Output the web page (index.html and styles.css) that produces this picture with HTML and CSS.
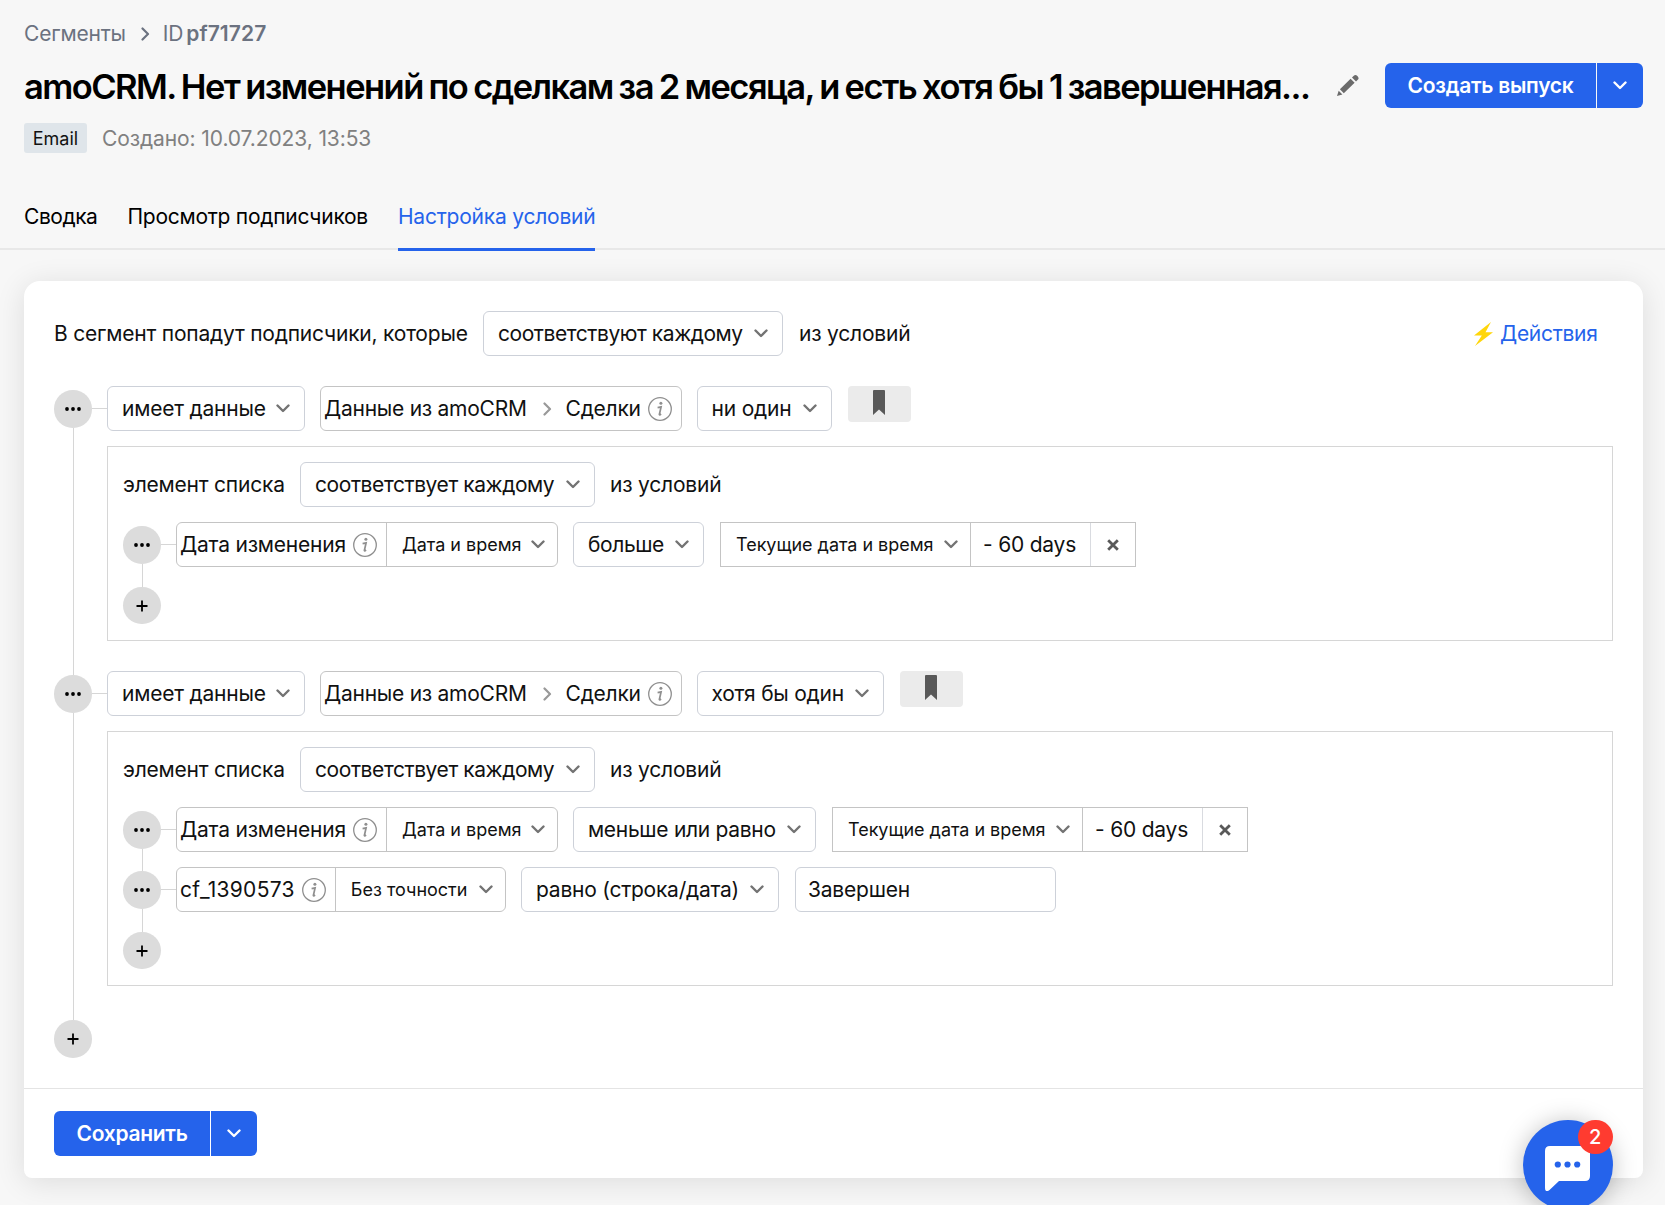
FILE: index.html
```html
<!DOCTYPE html>
<html lang="ru">
<head>
<meta charset="utf-8">
<title>Настройка условий</title>
<link rel="stylesheet" href="styles.css">
</head>
<body>
<svg class="defs" width="0" height="0" aria-hidden="true">
  <symbol id="down" viewBox="0 0 14 9"><path d="M1.500 1.500 7 7l5.500-5.500" fill="none" stroke="currentColor" stroke-width="2.400" stroke-linecap="round" stroke-linejoin="round"/></symbol>
  <symbol id="right" viewBox="0 0 9 14"><path d="M1.500 1.500 7 7l-5.500 5.500" fill="none" stroke="currentColor" stroke-width="2.200" stroke-linecap="round" stroke-linejoin="round"/></symbol>
  <symbol id="info" viewBox="0 0 24 24"><circle cx="12" cy="12" r="11.300" fill="none" stroke="currentColor" stroke-width="1.300"/><circle cx="12.900" cy="6.300" r="1.500" fill="currentColor"/><path d="M9.600 10.600l3.500-.7-1.700 7.300c-.2.900.4.800 1.700-.2" fill="none" stroke="currentColor" stroke-width="1.700"/></symbol>
  <symbol id="dots" viewBox="0 0 16 4"><circle cx="2" cy="2" r="1.900"/><circle cx="8" cy="2" r="1.900"/><circle cx="14" cy="2" r="1.900"/></symbol>
  <symbol id="plus" viewBox="0 0 12 12"><path d="M6 .5v11M.5 6h11" stroke="currentColor" stroke-width="1.800"/></symbol>
  <symbol id="mark" viewBox="0 0 12 25"><path d="M1 0h10q1 0 1 1v24l-6-5.500L0 25V1q0-1 1-1z" fill="currentColor"/></symbol>
  <symbol id="cross" viewBox="0 0 12 12"><path d="M1.200 1.200l9.600 9.600M10.800 1.200l-9.600 9.600" stroke="currentColor" stroke-width="2.800"/></symbol>
</svg>

<header class="header">
  <nav class="crumbs"><span>Сегменты</span><svg class="crumb-arrow"><use href="#right"/></svg><span>ID</span><b>pf71727</b></nav>
  <div class="headline">
    <h1 class="title">amoCRM. Нет изменений по сделкам за 2 месяца, и есть хотя бы 1 завершенная...</h1>
    <svg class="pencil" viewBox="0 0 22 21"><path d="M0 21l1.700-5.200 3.700 3.600zM2.900 14.300 13.600 3.800l4 3.900L6.800 18.200zM15 2.500 16.800.8q1.600-1.500 3.600.3 2 2 .6 3.500L19 6.500z" fill="#6b6b6b"/></svg>
    <div class="split create"><button class="btn">Создать выпуск</button><button class="btn-more"><svg class="down"><use href="#down"/></svg></button></div>
  </div>
  <div class="meta"><span class="tag">Email</span><span class="created">Создано: 10.07.2023, 13:53</span></div>
  <nav class="tabs"><a>Сводка</a><a>Просмотр подписчиков</a><a class="active">Настройка условий</a></nav>
</header>

<main class="card">
  <div class="conditions">
    <div class="row intro">
      <span class="label w-intro">В сегмент попадут подписчики, которые</span>
      <div class="select w-all"><span>соответствуют каждому</span><svg class="down"><use href="#down"/></svg></div>
      <span class="label">из условий</span>
      <a class="actions"><svg class="bolt" viewBox="0 0 19 24"><path d="M17 0 0 13.500h7.800L1 24 19 10.300h-7.500z" fill="#ffd60a"/></svg><span>Действия</span></a>
    </div>

    <section class="group">
      <div class="rail"><i class="lead"></i><div class="dot"><svg class="dots"><use href="#dots"/></svg></div><i class="line"></i></div>
      <i class="stub"></i>
      <div class="content">
        <div class="row">
          <div class="select w-has"><span>имеет данные</span><svg class="down"><use href="#down"/></svg></div>
          <div class="field w-path"><span>Данные из amoCRM</span><svg class="path-arrow"><use href="#right"/></svg><span>Сделки</span><svg class="info"><use href="#info"/></svg></div>
          <div class="select w-none"><span>ни один</span><svg class="down"><use href="#down"/></svg></div>
          <button class="bookmark"><svg><use href="#mark"/></svg></button>
        </div>
        <div class="box">
          <div class="row">
            <span class="label w-item">элемент списка</span>
            <div class="select w-each"><span>соответствует каждому</span><svg class="down"><use href="#down"/></svg></div>
            <span class="label">из условий</span>
          </div>
          <div class="rule">
            <div class="rail"><i class="lead"></i><div class="dot"><svg class="dots"><use href="#dots"/></svg></div><i class="line"></i></div>
            <i class="stub"></i>
            <div class="row">
              <div class="field joined w-date"><span>Дата изменения</span><svg class="info"><use href="#info"/></svg><div class="part"><span>Дата и время</span><svg class="down"><use href="#down"/></svg></div></div>
              <div class="select w-more"><span>больше</span><svg class="down"><use href="#down"/></svg></div>
              <div class="period"><div class="now"><span>Текущие дата и время</span><svg class="down"><use href="#down"/></svg></div><div class="shift">- 60 days</div><div class="clear"><svg><use href="#cross"/></svg></div></div>
            </div>
          </div>
          <div class="add"><div class="dot"><svg class="plus"><use href="#plus"/></svg></div></div>
        </div>
      </div>
    </section>

    <section class="group last">
      <div class="rail"><i class="lead"></i><div class="dot"><svg class="dots"><use href="#dots"/></svg></div><i class="line"></i></div>
      <i class="stub"></i>
      <div class="content">
        <div class="row">
          <div class="select w-has"><span>имеет данные</span><svg class="down"><use href="#down"/></svg></div>
          <div class="field w-path"><span>Данные из amoCRM</span><svg class="path-arrow"><use href="#right"/></svg><span>Сделки</span><svg class="info"><use href="#info"/></svg></div>
          <div class="select w-one"><span>хотя бы один</span><svg class="down"><use href="#down"/></svg></div>
          <button class="bookmark"><svg><use href="#mark"/></svg></button>
        </div>
        <div class="box">
          <div class="row">
            <span class="label w-item">элемент списка</span>
            <div class="select w-each"><span>соответствует каждому</span><svg class="down"><use href="#down"/></svg></div>
            <span class="label">из условий</span>
          </div>
          <div class="rule">
            <div class="rail"><i class="lead"></i><div class="dot"><svg class="dots"><use href="#dots"/></svg></div><i class="line"></i></div>
            <i class="stub"></i>
            <div class="row">
              <div class="field joined w-date"><span>Дата изменения</span><svg class="info"><use href="#info"/></svg><div class="part"><span>Дата и время</span><svg class="down"><use href="#down"/></svg></div></div>
              <div class="select w-less"><span>меньше или равно</span><svg class="down"><use href="#down"/></svg></div>
              <div class="period"><div class="now"><span>Текущие дата и время</span><svg class="down"><use href="#down"/></svg></div><div class="shift">- 60 days</div><div class="clear"><svg><use href="#cross"/></svg></div></div>
            </div>
          </div>
          <div class="rule">
            <div class="rail"><i class="lead"></i><div class="dot"><svg class="dots"><use href="#dots"/></svg></div><i class="line"></i></div>
            <i class="stub"></i>
            <div class="row">
              <div class="field joined w-cf"><span class="code">cf_1390573</span><svg class="info"><use href="#info"/></svg><div class="part"><span>Без точности</span><svg class="down"><use href="#down"/></svg></div></div>
              <div class="select w-equal"><span>равно (строка/дата)</span><svg class="down"><use href="#down"/></svg></div>
              <div class="value">Завершен</div>
            </div>
          </div>
          <div class="add"><div class="dot"><svg class="plus"><use href="#plus"/></svg></div></div>
        </div>
      </div>
    </section>
    <div class="dot"><svg class="plus"><use href="#plus"/></svg></div>
  </div>
  <footer class="footer">
    <div class="split save"><button class="btn">Сохранить</button><button class="btn-more"><svg class="down"><use href="#down"/></svg></button></div>
  </footer>
</main>

<div class="chat">
  <svg viewBox="0 0 45 45"><path d="M5 0h35q5 0 5 5v25q0 5-5 5H14L4.500 44Q0 47 0 42V5q0-5 5-5z" fill="#fff"/><circle cx="12.800" cy="18.500" r="3.100"/><circle cx="22.500" cy="18.500" r="3.100"/><circle cx="32.200" cy="18.500" r="3.100"/></svg>
  <span class="count">2</span>
</div>
</body>
</html>
```
FILE: styles.css
```css
* { box-sizing: border-box; }
html, body { height: 100%; }
body {
  margin: 0;
  background: #f7f7f7;
  color: #111;
  font: 400 21px/30px Inter, "Liberation Sans", sans-serif;
  letter-spacing: -.21px;
  overflow: hidden;
}
svg { display: block; flex: none; }
.defs { position: absolute; }
span, b, a, h1 { white-space: nowrap; }
button { border: 0; padding: 0; font: inherit; color: inherit; letter-spacing: inherit; }

/* Page header */
.header { border-bottom: 2px solid #e8e8e8; height: 250px; padding: 19px 22px 0 24px; display: flex; flex-direction: column; }
.crumbs { display: flex; align-items: center; height: 30px; color: #6b7280; }
.crumb-arrow { width: 9px; height: 14px; margin: 0 13px 0 15px; }
.crumbs b { font-weight: 600; margin-left: 3px; letter-spacing: .1px; }
.headline { display: flex; align-items: center; height: 45px; margin-top: 14px; }
.title { margin: 0; width: 1313px; font-size: 34.500px; line-height: 46px; padding-top: 2px; font-weight: 600; letter-spacing: -1.560px; word-spacing: -1.300px; color: #000; }
.pencil { width: 22px; height: 21px; }
.split { display: flex; height: 45px; border-radius: 6px; overflow: hidden; color: #fff; font-weight: 600; gap: 1px; letter-spacing: -.28px; }
.create { margin-left: auto; width: 258px; }
.save { width: 203px; }
.btn { flex: 1; background: #2563eb; }
.btn-more { width: 46px; background: #2563eb; display: grid; place-items: center; }
.down { width: 14px; height: 9px; color: #737373; }
.btn-more .down { color: #fff; }
.meta { display: flex; align-items: center; margin-top: 15px; height: 30px; gap: 15px; color: #808080; }
.created { letter-spacing: -.1px; padding-top: 1px; }
.tag { width: 63px; height: 30px; line-height: 31px; border-radius: 3px; background: #dfe5ea; color: #111; font-size: 18px; text-align: center; letter-spacing: 0; }
.tabs { display: flex; gap: 30px; margin-top: 43px; height: 55px; color: #000; letter-spacing: -.26px; }
.tabs a { padding-top: 6px; height: 55px; border-bottom: 3px solid transparent; }
.tabs a:first-child { letter-spacing: -.45px; }
.tabs .active { color: #2563eb; border-color: #2563eb; letter-spacing: -.22px; }

/* Card and controls */
.card { margin: 31px 22px 0 24px; height: 897px; background: #fff; border-radius: 16px 16px 8px 8px; box-shadow: 0 4px 30px rgba(0,0,0,.11); display: flex; flex-direction: column; }
.conditions { flex: 1; padding: 30px 30.500px 0 30px; }
.row { display: flex; gap: 15px; height: 45px; align-items: center; }
.intro { gap: 16px; }
.select, .field, .value { height: 45px; border: 1px solid #cdd1d9; border-radius: 6px; display: flex; align-items: center; flex: none; }
.select { padding: 0 14px; justify-content: space-between; }
.field { border-color: #c4c4c4; padding-left: 3px; }
.label { flex: none; }
.w-intro { width: 413px; }
.w-all { width: 300px; letter-spacing: -.44px; }
.w-has { width: 198px; }
.w-path { width: 361.500px; letter-spacing: -.26px; }
.w-none { width: 135px; letter-spacing: -.2px; }
.w-one { width: 187px; letter-spacing: -.25px; }
.w-item { width: 162px; }
.w-each { width: 295px; letter-spacing: -.42px; }
.w-date { width: 382px; }
.w-cf { width: 330px; }
.w-more { width: 131px; letter-spacing: -.4px; }
.w-less { width: 243px; letter-spacing: -.3px; }
.w-equal { width: 258px; letter-spacing: -.24px; }
.code { letter-spacing: .3px; }
.value { width: 261px; padding-left: 12px; margin-left: 1px; }
.path-arrow { width: 9px; height: 14px; margin: 0 14px 0 16px; color: #999; }
.info { width: 24px; height: 24px; margin-left: 7px; color: #8f8f8f; }
.actions { margin-left: auto; margin-right: 15px; display: flex; align-items: center; gap: 7px; color: #2563eb; letter-spacing: -.3px; }
.bolt { width: 19px; height: 24px; }
.bookmark { width: 63px; height: 36px; border-radius: 4px; background: #ebebeb; color: #595959; align-self: flex-start; display: flex; justify-content: center; padding-top: 4px; margin-left: 1px; }
.bookmark svg { width: 12px; height: 25px; }

/* Condition tree */
.group { display: flex; margin-top: 30px; height: 285px; }
.group.last { margin-top: 0; height: 349px; }
.rail { width: 38px; display: flex; flex-direction: column; align-items: center; flex: none; }
.lead { height: 4px; }
.last > .rail .lead, .rule + .rule .lead { width: 1px; background: #d6d6d6; }
.line { flex: 1; width: 1px; background: #d6d6d6; }
.stub { width: 15px; height: 1px; background: #d6d6d6; margin-top: 22px; flex: none; }
.dot { width: 37.500px; height: 37.500px; border-radius: 50%; background: #dcdcdc; display: grid; place-items: center; flex: none; color: #000; }
.dots { width: 16px; height: 4px; }
.plus { width: 12px; height: 12px; }
.content { flex: 1; }
.box { border: 1px solid #d6d6d6; margin-top: 14.500px; padding: 15.500px 15px 0; height: 195px; }
.last .box { height: 255px; }
.rule { display: flex; height: 60px; }
.box > .row { margin-bottom: 15px; }
.rule:has(+ .add) .rail { margin-bottom: -5px; }
.add { padding-top: 4.500px; }
.add .plus { margin-top: 1px; }
.joined .info { margin-left: 7px; margin-right: 9px; }
.part { flex: 1; height: 100%; border-left: 1px solid #c4c4c4; padding: 0 12px 0 15px; display: flex; align-items: center; justify-content: space-between; font-size: 18px; letter-spacing: 0; }
.period { display: flex; width: 416px; height: 45px; border: 1px solid #c4c4c4; margin-left: 1px; }
.now { width: 250px; border-right: 1px solid #c4c4c4; padding: 0 12px 0 15px; display: flex; align-items: center; justify-content: space-between; font-size: 18px; letter-spacing: -.03px; }
.shift { width: 120px; padding-left: 12px; border-right: 1px solid #d9dbe0; line-height: 44px; white-space: nowrap; }
.clear { flex: 1; display: grid; place-items: center; color: #595959; }
.clear svg { width: 12px; height: 12px; }
.footer { height: 90px; border-top: 1px solid #e4e4e4; padding: 22px 30px; }

/* Floating chat button */
.chat { position: absolute; left: 1522.500px; top: 1120px; width: 90px; height: 90px; border-radius: 50%; background: #2563eb; box-shadow: 0 2px 24px rgba(0,0,0,.25); padding: 26px 0 0 22px; fill: #2563eb; }
.chat svg { width: 45px; height: 45px; }
.count { position: absolute; right: 0; top: 0; width: 35px; height: 34px; border-radius: 17px; background: #ff3b30; color: #fff; text-align: center; line-height: 34px; font-size: 20px; font-weight: 500; }
```
